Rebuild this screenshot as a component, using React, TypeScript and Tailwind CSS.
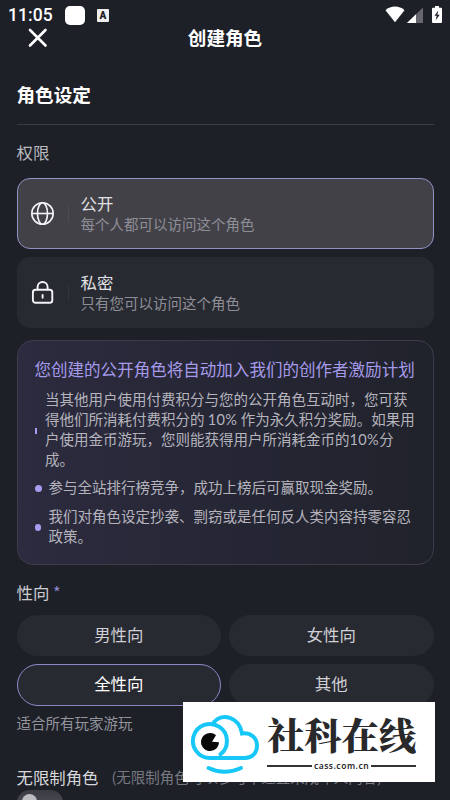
import React from 'react';
import clsx from 'clsx';

const accessOptions = [
  { id: 'public', title: '公开', desc: '每个人都可以访问这个角色' },
  { id: 'private', title: '私密', desc: '只有您可以访问这个角色' },
];

const orientations = ['男性向', '女性向', '全性向', '其他'];

const GlobeIcon = () => (
  <svg width="24" height="24" viewBox="0 0 24 24" fill="none" stroke="#f4f4f6" strokeWidth="1.6">
    <circle cx="11.5" cy="11.5" r="10.7" />
    <ellipse cx="11.5" cy="11.5" rx="5" ry="10.7" />
    <path d="M.8 11.5h21.4" />
  </svg>
);

const LockIcon = () => (
  <svg width="24" height="24" viewBox="0 0 24 24" fill="none" stroke="#f4f4f6" strokeWidth="1.9" strokeLinecap="round">
    <rect x="1.9" y="8.8" width="19.4" height="13" rx="2.6" />
    <path d="M6.6 8.5V6a5 5 0 0 1 10 0V8.5M11.6 14v2.8" />
  </svg>
);

const StatusBar = () => (
  <div className="flex h-[25px] items-start pl-[8px] pr-[7px] text-white">
    <span className="mt-[5px] w-[57px] font-[Roboto] text-[17.5px] font-medium leading-[21px] tracking-[0.1px]">11:05</span>
    <div className="mt-[6px] h-[19px] w-[20px] rounded-[5px] bg-white" />
    <div className="ml-[12px] mt-[9px] flex h-[13px] w-[12px] items-center justify-center rounded-[1px] bg-[#eeeeef] font-[Roboto] text-[10px] font-black text-[#1e2028]">
      A
    </div>
    <svg className="ml-auto mt-[6px]" width="58" height="18" viewBox="0 0 58 18">
      <path d="M0.5 4.2C5.5-.7 14.5-.7 19.5 4.2L10 16.2Z" fill="#fff" />
      <path d="M22 17 38 1.5V17Z" fill="#66676d" />
      <path d="M22 17 31 8.3V17Z" fill="#fff" />
      <path d="M50 1.7V0h4v1.7h2q1 0 1 1V16q0 1-1 1h-8q-1 0-1-1V2.7q0-1 1-1Z" fill="#fff" />
      <path d="M53.3 4.5 49.5 9.8h2.2l-1 4.5 4-5.6h-2.3Z" fill="#1e2028" />
    </svg>
  </div>
);

const AccessCard = ({ id, title, desc }: { id: string; title: string; desc: string }) => (
  <div
    className={clsx(
      'flex h-[71px] items-center rounded-[13px] border pl-[13px]',
      id === 'public' ? 'border-[#9390c6] bg-[#424148]' : 'border-[#282a32] bg-[#282a32]'
    )}
  >
    {id === 'public' ? <GlobeIcon /> : <LockIcon />}
    <div className="ml-[13px] h-[16px] w-px bg-white/5" />
    <div className="mb-[2px] ml-[12px]">
      <div className="text-[16.4px] leading-[22px] text-[#e1e1e5]">{title}</div>
      <div className="text-[14.5px] leading-[20px] text-[#8e8e96]">{desc}</div>
    </div>
  </div>
);

const Percent = () => <span className="font-[Lato] text-[14.5px] leading-none tracking-[0.4px]">10%</span>;

const PromoPanel = () => (
  <div className="mt-[12px] h-[225px] rounded-[16px] border border-[#3c3c4c] bg-linear-to-r from-[#2c2b3f] to-[#20222b] pl-[17px] pt-[16px]">
    <div className="whitespace-nowrap text-[16.55px] leading-[24px] text-[#a69bea]">
      您创建的公开角色将自动加入我们的创作者激励计划
    </div>
    <ul className="mt-[8px] text-[14.5px] leading-[20px] text-[#b5b4bd]">
      <li className="flex h-[80px] items-center">
        <span className="mt-[3px] h-[6px] w-[2.5px] bg-[#a79df0]" />
        <div className="ml-[8px] whitespace-nowrap">
          当其他用户使用付费积分与您的公开角色互动时，您可获
          <br />
          得他们所消耗付费积分的 <Percent /> 作为永久积分奖励。如果用
          <br />
          户使用金币游玩，您则能获得用户所消耗金币的
          <Percent />分
          <br />
          成。
        </div>
      </li>
      <li className="mt-[8px] flex h-[20px] items-center">
        <span className="mt-[2px] h-[7px] w-[7px] rounded-full bg-[#a79df0]" />
        <div className="ml-[7px] whitespace-nowrap">参与全站排行榜竞争，成功上榜后可赢取现金奖励。</div>
      </li>
      <li className="mt-[9px] flex h-[40px] items-center">
        <span className="mt-[3px] h-[7px] w-[6px] rounded-[3px] bg-[#a79df0]" />
        <div className="ml-[8px] whitespace-nowrap">
          我们对角色设定抄袭、剽窃或是任何反人类内容持零容忍
          <br />
          政策。
        </div>
      </li>
    </ul>
  </div>
);

const SiteBadge = () => (
  <div className="absolute left-[183px] top-[702px] flex h-[80px] w-[252px] bg-white">
    <svg width="82" height="80" viewBox="0 0 82 80" fill="none" stroke="#17c7f7" strokeWidth="4" strokeLinecap="round">
      <path d="M31 20C39 11 56 14 59 31.5C68 30.5 74 36 74 43.5C74 51 69 56 62 56H27A17 17 0 1 1 37.5 52.3" />
      <path d="M25.5 66Q41 73.5 58 66" />
      <path d="M29 39.8 33 33.3A9 9 0 1 0 36 40.3Z" fill="#090909" stroke="none" />
    </svg>
    <div className="flex flex-1 flex-col pt-[11px] text-[#29292b]">
      <div className="ml-[2px] whitespace-nowrap font-['Noto_Serif_CJK_SC','Noto_Sans_CJK_SC',serif] text-[37.3px] font-black leading-[42px]">
        社科在线
      </div>
      <div className="ml-[2px] mt-[5px] flex w-[149px] items-center gap-[2px] font-['Noto_Sans'] text-[8.5px] font-semibold leading-[12px] tracking-[0.5px]">
        <span className="h-[1.5px] flex-1 bg-[#333]" />
        cass.com.cn
        <span className="h-[1.5px] flex-1 bg-[#333]" />
      </div>
    </div>
  </div>
);

const App = () => {
  return (
    <div className="relative h-[800px] w-[450px] overflow-hidden bg-[#1e2028] font-['Noto_Sans_CJK_SC',sans-serif]">
      <StatusBar />
      <header className="grid h-[25px] grid-cols-3 items-start">
        <svg className="ml-[28px] mt-[3px]" width="20" height="20" viewBox="0 0 20 20" stroke="#fff" strokeWidth="2.6" strokeLinecap="round">
          <path d="M2 2 17.5 17.5M17.5 2 2 17.5" />
        </svg>
        <h1 className="text-center text-[18.6px] font-bold leading-[23px] text-white">创建角色</h1>
      </header>

      <main className="pl-[16.5px] pr-[16.5px]">
        <h2 className="mt-[30px] text-[18.6px] font-bold leading-[28px] text-white">角色设定</h2>
        <div className="mt-[16px] h-px bg-[#3a3b45]" />
        <div className="mt-[15px] text-[16.4px] leading-[24px] text-[#b9b9bf]">权限</div>
        <div className="mt-[14px] flex flex-col gap-[8px]">
          {accessOptions.map((option) => (
            <AccessCard key={option.id} {...option} />
          ))}
        </div>

        <PromoPanel />

        <div className="mt-[15px] text-[16.4px] leading-[24px] text-[#cdcdd2]">
          性向 <span className="text-[#8f87cf]">*</span>
        </div>
        <div className="mt-[10.5px] grid grid-cols-2 gap-[8px]">
          {orientations.map((label) => (
            <div
              key={label}
              className={clsx(
                'flex h-[41.5px] items-center justify-center rounded-full border bg-[#282a32] pb-[2px] text-[16.4px]',
                label === '全性向' ? 'border-[#8e88c8] text-white' : 'border-[#282a32] text-[#d0d0d5]'
              )}
            >
              {label}
            </div>
          ))}
        </div>
        <div className="mt-[7px] text-[14.5px] leading-[20px] text-[#93949c]">适合所有玩家游玩</div>

        <div className="mt-[32.5px] flex items-center whitespace-nowrap leading-[24px]">
          <span className="text-[16.4px] text-[#d8d8dc]">无限制角色</span>
          <span className="ml-[13px] text-[14.5px] text-[#777880]">(无限制角色可以参与不适宜未成年人内容)</span>
        </div>
        <div className="mt-[1px] h-[25px] w-[46px] rounded-full bg-linear-to-b from-[#3b3c43] to-[#55565d] pl-[5px] pt-[4px]">
          <div className="h-[15px] w-[15px] rounded-full bg-[#bcbcc0]" />
        </div>
      </main>

      <SiteBadge />
    </div>
  );
};

export default App;
